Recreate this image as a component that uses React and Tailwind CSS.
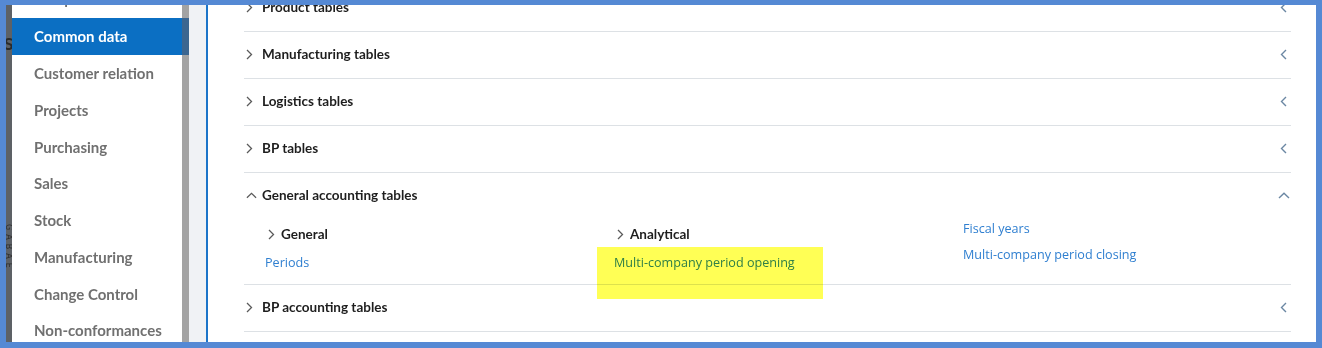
import React from "react";

const sideItems = [
  "Setup",
  "Common data",
  "Customer relation",
  "Projects",
  "Purchasing",
  "Sales",
  "Stock",
  "Manufacturing",
  "Change Control",
  "Non-conformances",
  "Quality",
];

function ChevRight() {
  return (
    <svg width="7" height="11" viewBox="0 0 7 11" className="shrink-0">
      <path d="M1 1 L5.5 5.5 L1 10" fill="none" stroke="#5a5a5a" strokeWidth="1.3" />
    </svg>
  );
}

function ChevLeft() {
  return (
    <svg width="7" height="11" viewBox="0 0 7 11" className="shrink-0">
      <path d="M6 1 L1.5 5.5 L6 10" fill="none" stroke="#6b87a3" strokeWidth="1.4" />
    </svg>
  );
}

function ChevUp({ color = "#6b87a3", w = 12 }) {
  return (
    <svg width={w} height="7" viewBox="0 0 12 7" className="shrink-0">
      <path d="M1 6 L6 1.2 L11 6" fill="none" stroke={color} strokeWidth="1.4" />
    </svg>
  );
}

function Row({ label }) {
  return (
    <div className="h-[47px] border-b border-[#dde1e5] pb-[3px]">
      <div className="flex h-[44px] items-center pl-[2px] pr-[4px]">
        <ChevRight />
        <span className="ml-[9px] flex-1 font-['Lato'] text-[13.5px] font-bold text-[#1e1e1e]">
          {label}
        </span>
        <ChevLeft />
      </div>
    </div>
  );
}

function SubGroup({ title, link }) {
  return (
    <div className="flex flex-col">
      <div className="flex h-[34px] items-center pl-[3px]">
        <ChevRight />
        <span className="ml-[6px] font-['Lato'] text-[13.5px] font-bold text-[#1e1e1e]">{title}</span>
      </div>
      <div className="flex h-[24px] items-center font-['Open_Sans'] text-[12.6px] text-[#2f7fd0]">{link}</div>
    </div>
  );
}

export default function App() {
  return (
    <div className="h-[348px] w-[1322px] bg-[#5589d4] pt-[5px] pr-[6px] pb-[6px] pl-[6px]">
      <div className="flex h-[337px] overflow-hidden bg-white">
        {/* dark strip */}
        <div className="flex w-[6px] shrink-0 flex-col items-start overflow-hidden bg-[#5d6166]">
          <span className="mt-[30px] ml-[-2px] font-['Lato'] text-[17px] font-bold leading-none text-[#2a2a2a]">S</span>
          <span className="mt-[172px] ml-[-1px] font-['DejaVu_Sans'] text-[8px] leading-[7px] tracking-[4px] text-[#2e2e2e] [writing-mode:vertical-rl]">
            GABAE
          </span>
        </div>
        {/* sidebar */}
        <div className="flex w-[177px] shrink-0 flex-col">
          <div className="mt-[-23.5px] flex flex-col">
            {sideItems.map((it) => {
              const active = it === "Common data";
              return (
                <div
                  key={it}
                  className={`flex h-[36.75px] shrink-0 items-center ${active ? "bg-[#0b6fc3]" : "bg-white"}`}
                >
                  <div className="flex h-full w-[170px] items-center pl-[22px]">
                    <span
                      className={`font-['Lato'] text-[15px] font-bold ${active ? "text-white" : "text-[#707070]"} ${it === "Setup" ? "-translate-y-[2px]" : ""}`}
                    >
                      {it}
                    </span>
                  </div>
                  <div className={`h-full w-[7px] ${active ? "bg-[#3c6690]" : "bg-[#a3a3a3]"}`} />
                </div>
              );
            })}
          </div>
        </div>
        <div className="w-[17px] shrink-0 bg-[#f0f2f5]" />
        <div className="w-[2px] shrink-0 bg-[#1c75c9]" />
        {/* main */}
        <div className="min-w-0 flex-1 pl-[36px] pr-[25px]">
          <div className="mt-[-20px] flex flex-col">
            <Row label="Product tables" />
            <Row label="Manufacturing tables" />
            <Row label="Logistics tables" />
            <Row label="BP tables" />
            <div className="relative border-b border-[#dde1e5]">
              <div className="flex h-[44px] items-center pl-[2px] pr-[1px]">
                <ChevUp color="#5a5a5a" w={11} />
                <span className="ml-[5px] flex-1 font-['Lato'] text-[13.5px] font-bold text-[#1e1e1e]">
                  General accounting tables
                </span>
                <ChevUp />
              </div>
              <div className="grid h-[67px] grid-cols-[349px_349px_1fr] pl-[21px]">
                <SubGroup title="General" link="Periods" />
                <SubGroup title="Analytical" link="Multi-company period opening" />
                <div className="flex flex-col gap-[2px]">
                  <div className="flex h-[24px] items-center font-['Open_Sans'] text-[12.6px] text-[#2f7fd0]">Fiscal years</div>
                  <div className="flex h-[24px] items-center font-['Open_Sans'] text-[12.6px] text-[#2f7fd0]">
                    Multi-company period closing
                  </div>
                </div>
              </div>
              <div className="pointer-events-none absolute top-[74px] left-[353px] h-[52px] w-[226px] bg-[#ffff55] mix-blend-multiply" />
            </div>
            <Row label="BP accounting tables" />
          </div>
        </div>
      </div>
    </div>
  );
}
